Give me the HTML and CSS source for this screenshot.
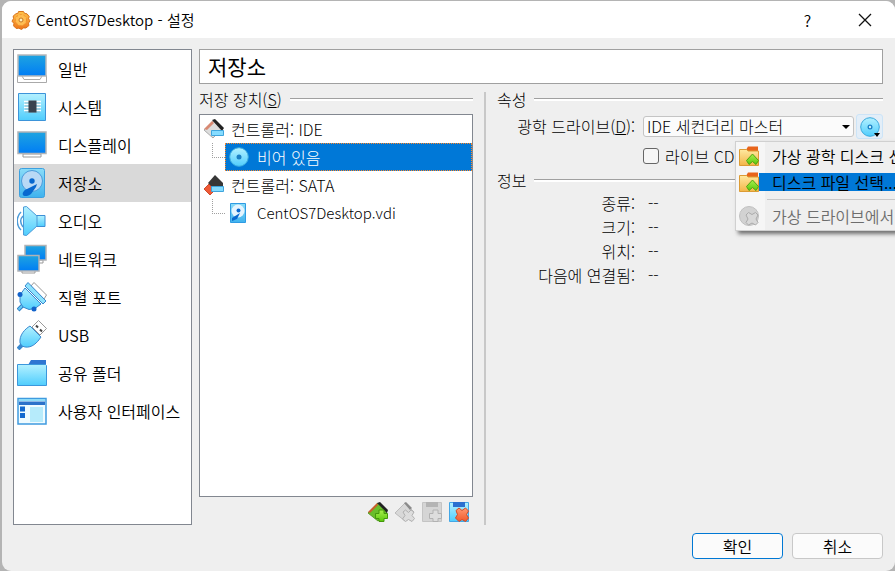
FILE: index.html
```html
<!DOCTYPE html>
<html lang="ko">

<head>
    <meta charset="UTF-8">
    <meta name="viewport" content="width=device-width, initial-scale=1.0">
    <title>CentOS7Desktop - 설정</title>
    <link rel="stylesheet" href="styles.css">
</head>

<body>
    <!-- shared gradients and icon shapes -->
    <svg class="defs" width="0" height="0" aria-hidden="true">
        <defs>
            <linearGradient id="screen" x1="0" y1="0" x2="0" y2="1">
                <stop offset="0" stop-color="#1fa4e0" />
                <stop offset="1" stop-color="#007df5" />
            </linearGradient>
            <linearGradient id="sky" x1="0" y1="0" x2="0" y2="1">
                <stop offset="0" stop-color="#b4f1ff" />
                <stop offset="1" stop-color="#4fcdfd" />
            </linearGradient>
            <linearGradient id="disk" x1="0" y1="0" x2="0" y2="1">
                <stop offset="0" stop-color="#8adcf8" />
                <stop offset="1" stop-color="#3fb2ee" />
            </linearGradient>
            <linearGradient id="gold" x1="0" y1="0" x2="0" y2="1">
                <stop offset="0" stop-color="#ffe9a0" />
                <stop offset="1" stop-color="#f3b548" />
            </linearGradient>
            <linearGradient id="orange" x1="0" y1="0" x2="0" y2="1">
                <stop offset="0" stop-color="#ffc44d" />
                <stop offset="1" stop-color="#ee7419" />
            </linearGradient>
            <linearGradient id="green" x1="0" y1="0" x2="0" y2="1">
                <stop offset="0" stop-color="#a8ef4c" />
                <stop offset="1" stop-color="#5bc70d" />
            </linearGradient>
            <linearGradient id="red" x1="0" y1="0" x2="0" y2="1">
                <stop offset="0" stop-color="#ff9a72" />
                <stop offset="1" stop-color="#f2592b" />
            </linearGradient>
            <symbol id="cd" viewBox="0 0 20 20">
                <circle cx="10" cy="10" r="9.300" fill="url(#sky)" stroke="#3ba9dc" />
                <circle cx="10" cy="10" r="2.500" fill="#1c7fc4" />
            </symbol>
            <symbol id="folder-up" viewBox="0 0 20 20">
                <path d="M7 4l2-3.500h10V6H7z" fill="#e8641b" />
                <path d="M.5 3.500h7L9 5h10.500v14.500H.5z" fill="url(#gold)" stroke="#dc9c35" />
                <path d="M13.500 8l6 6.500-2.500 4-3.500-3-3.500 3-2.500-4z" fill="url(#green)" stroke="#4da411" />
            </symbol>
        </defs>
    </svg>

    <div class="window">
        <header class="titlebar">
            <svg class="gear" viewBox="0 0 20 20">
                <path d="M7.500 1.500h5l1.200 2 2.300.3 2.200 2.700-.7 2.300 1.500 2-1.500 2.300.4 2.500-3 2.400-2.400-.1-2 1.600-2.700-1.300-2.600.3-2.600-2.600.3-2.500-1.900-2.200L2.500 8.500 2.200 6 5 3.700l1.800-.2z" fill="url(#orange)" stroke="#d9731c" />
                <circle cx="10" cy="10" r="5.500" fill="#ffbd52" stroke="#f0912d" stroke-dasharray="2 2" />
                <circle cx="10" cy="10" r="2" fill="#fff0bf" stroke="#c77521" />
            </svg>
            <h1>CentOS7Desktop - 설정</h1>
            <button class="caption" aria-label="도움말">?</button>
            <button class="caption" aria-label="닫기">
                <svg width="14" height="14" viewBox="0 0 14 14" stroke="#111" stroke-width="1.300"><path d="M1 1l12 12M13 1L1 13" /></svg>
            </button>
        </header>

        <div class="content">
            <nav class="sidebar">
                <a href="#">
                    <svg viewBox="0 0 30 30">
                        <path d="M.5 21.500h29v7H.5z" fill="#fff" stroke="#aaa" />
                        <path d="M5 22l2 3.500h16l2-3.500" fill="#fff" stroke="#aaa" />
                        <path d="M1 1h28v21H1z" fill="url(#screen)" stroke="#b5b8bb" stroke-width="1.500" />
                    </svg>
                    일반
                </a>
                <a href="#">
                    <svg viewBox="0 0 30 30">
                        <path d="M1.500 1.500h27v27h-27z" fill="url(#sky)" stroke="#3d94d9" />
                        <path d="M7 9.500h17M7 12.500h17M7 15.500h17M7 18.500h17" stroke="#fff" stroke-width="1.500" />
                        <path d="M8 11h15M8 14h15M8 17h15M8 20h15" stroke="#9aaab3" stroke-width=".7" />
                        <path d="M11.500 8.500h8v12h-8z" fill="#39424e" />
                    </svg>
                    시스템
                </a>
                <a href="#">
                    <svg viewBox="0 0 30 30">
                        <path d="M6 24h18v3H6z" fill="#fff" stroke="#999" />
                        <path d="M1 2h28v21.500H1z" fill="url(#screen)" stroke="#b0b3b6" stroke-width="1.500" />
                    </svg>
                    디스플레이
                </a>
                <a href="#" class="active">
                    <svg viewBox="0 0 30 30">
                        <rect x="2.500" y=".5" width="25" height="29" rx="2" fill="url(#disk)" stroke="#3da0df" />
                        <circle cx="15" cy="13" r="10.500" fill="#b9d9f5" stroke="#4c9cdb" />
                        <path d="M20 16l-1 3-5 7c-2 2-7 3-8 1s1-5 4-6z" fill="#0868cf" />
                        <circle cx="15" cy="13" r="2.700" fill="#0868cf" />
                    </svg>
                    저장소
                </a>
                <a href="#">
                    <svg viewBox="0 0 30 30">
                        <path d="M4 6C-1 11-1 19 4 24M6 10c-3 3-3 7 0 11" fill="none" stroke="#4c9bd8" stroke-width="1.500" />
                        <path d="M17 9.500h11v11H17z" fill="url(#sky)" stroke="#3c8fd6" />
                        <path d="M6.500 1l3-.5L20 10v10L9.500 29.500l-3-.5z" fill="url(#sky)" stroke="#4c9bd8" />
                    </svg>
                    오디오
                </a>
                <a href="#">
                    <svg viewBox="0 0 30 30">
                        <path d="M20 16h6v3h-6z" fill="#fff" stroke="#999" />
                        <path d="M8 1.500h21V16H8z" fill="url(#screen)" stroke="#b0b3b6" stroke-width="1.500" />
                        <path d="M5 26.500h13v2.500H5z" fill="#fff" stroke="#999" />
                        <path d="M1 11.500h21V27H1z" fill="url(#screen)" stroke="#b0b3b6" stroke-width="1.500" />
                    </svg>
                    네트워크
                </a>
                <a href="#">
                    <svg viewBox="0 0 30 30">
                        <path d="M14 4l3-3.500L29.500 13 27 17z" fill="#fff" stroke="#999" />
                        <path d="M1 28l5-5" stroke="#2f7fc6" stroke-width="4" />
                        <path d="M1.500 27.500L6 23" stroke="#65c9f5" stroke-width="2" />
                        <path d="M8 6L24 22l-6 4.500-6 1-6-2.500-3-5v-7z" fill="url(#sky)" stroke="#3988cf" />
                        <path d="M8 4l3-3.500L29 19l-3 3z" fill="#8ce2fd" stroke="#3988cf" />
                        <circle cx="3" cy="12.500" r="2.500" fill="#1263cb" />
                        <circle cx="17" cy="27" r="2.500" fill="#1263cb" />
                    </svg>
                    직렬 포트
                </a>
                <a href="#">
                    <svg viewBox="0 0 30 30">
                        <path d="M15 7l6.500-6.500 8 8L23 15z" fill="#fff" stroke="#999" />
                        <path d="M19 5.500l2 2M23 9.500l2 2" stroke="#444" stroke-width="2" />
                        <path d="M1 29l4-4" stroke="#3988cf" stroke-width="4" />
                        <path d="M13 6l11 11c-4 6-9 11-16 10l-3-1-2-3C2 15 8 9 13 6z" fill="url(#sky)" stroke="#3988cf" />
                    </svg>
                    USB
                </a>
                <a href="#">
                    <svg viewBox="0 0 30 30">
                        <path d="M11 7l3-5h15v6H11z" fill="#2f76d2" />
                        <path d="M.5 6.500h28l1 1v20H.5z" fill="url(#sky)" stroke="#3b97dc" />
                    </svg>
                    공유 폴더
                </a>
                <a href="#">
                    <svg viewBox="0 0 30 30">
                        <path d="M1 2.500h28v25.500H1z" fill="#effbff" stroke="#3f9bdf" stroke-width="1.500" />
                        <path d="M2 3h26v2H2z" fill="#8edcf8" />
                        <path d="M2 5.500h26v3.500H2z" fill="#2c72ca" />
                        <path d="M3 10.500h5v5H3zM3 17h5v5H3z" fill="#1368ce" />
                        <path d="M13 11h13v15H13z" fill="#b6ebfb" />
                    </svg>
                    사용자 인터페이스
                </a>
            </nav>

            <main class="page">
                <h2 class="page-title">저장소</h2>

                <div class="columns">
                    <section class="devices">
                        <h3 class="group"><span>저장 장치(<u>S</u>)</span></h3>
                        <ul class="tree">
                            <li>
                                <svg viewBox="0 0 20 20">
                                    <path d="M0 11L9 2l9 8-9 9z" fill="#ddd" stroke="#aaa" />
                                    <path d="M0 10l8-8 2 2-7 7z" fill="#d88973" />
                                    <path d="M8 1l3-1 9 9-2 3z" fill="#222" />
                                    <path d="M7.500 11.500h12v5h-12z" fill="#86dcff" stroke="#3fa4dc" />
                                </svg>
                                컨트롤러: IDE
                            </li>
                            <li class="child">
                                <span class="branch"></span>
                                <span class="node selected">
                                    <svg viewBox="0 0 20 20"><use href="#cd" /></svg>
                                    비어 있음
                                </span>
                            </li>
                            <li>
                                <svg viewBox="0 0 20 20">
                                    <path d="M0 14l5-5 6 6-5 5z" fill="#ef5a36" stroke="#cf4c2d" />
                                    <path d="M4 8l7-8 8 8v5l-8 2z" fill="#373737" />
                                    <path d="M7.500 11.500h12v5h-12z" fill="#86dcff" stroke="#3fa4dc" />
                                </svg>
                                컨트롤러: SATA
                            </li>
                            <li class="child">
                                <span class="branch"></span>
                                <span class="node file">
                                    <svg viewBox="0 0 20 20">
                                        <path d="M1.500.5h15v19h-15z" fill="url(#disk)" stroke="#2e9be3" />
                                        <circle cx="9" cy="8" r="6.500" fill="#e4f4fe" />
                                        <path d="M11 10l-3 6-5 2v-3z" fill="#0868cf" />
                                        <circle cx="9.500" cy="7.500" r="2" fill="#0868cf" />
                                    </svg>
                                    CentOS7Desktop.vdi
                                </span>
                            </li>
                        </ul>
                        <div class="toolbar">
                            <button aria-label="컨트롤러 추가">
                                <svg viewBox="0 0 20 20">
                                    <path d="M0 11L10 1l9 9-9 9z" fill="#69bd2b" stroke="#5b9e2c" />
                                    <path d="M0 10l9-9 1 2-8 8z" fill="#c75f2c" />
                                    <path d="M9 1l3-1 8 8-1 3z" fill="#222" />
                                    <path d="M11 8h5v3.500h3.500v5H16v3h-5v-3H7.500v-5H11z" fill="url(#green)" stroke="#43980b" />
                                </svg>
                            </button>
                            <button aria-label="컨트롤러 삭제" disabled>
                                <svg viewBox="0 0 20 20">
                                    <path d="M0 11L10 1l9 9-9 9z" fill="#d8d8d8" stroke="#bbb" />
                                    <path d="M9 1l2-1 6 6-2 2z" fill="#8b8b8b" />
                                    <path d="M8 10l2.500-2 3 2.500L16 8l3 2-2 3.500 2.500 3L17 19.500l-3.500-2-3 2L7.500 17l2.500-3.500z" fill="#ddd" stroke="#b0b0b0" />
                                </svg>
                            </button>
                            <button aria-label="연결 추가" disabled>
                                <svg viewBox="0 0 20 20">
                                    <path d="M.5.5h19v19H.5z" fill="#d5d5d5" stroke="#c4c4c4" />
                                    <path d="M4 0h12v5H4z" fill="#b4b4b4" />
                                    <path d="M11 8h5v3.500h3.500v5H16v3h-5v-3H7.500v-5H11z" fill="#ddd" stroke="#b2b2b2" />
                                </svg>
                            </button>
                            <button aria-label="연결 삭제">
                                <svg viewBox="0 0 20 20">
                                    <path d="M.5.5h19v19H.5z" fill="url(#sky)" stroke="#43a7e6" />
                                    <path d="M4 0h12v5H4z" fill="#2b70cf" />
                                    <path d="M7 8.500L10 6l3 2.500L16.500 6l3 3-2 3.500 2 3.500-3 3.500-3.500-2-3 2L6.500 16l2-3.500z" fill="url(#red)" stroke="#d24a25" />
                                </svg>
                            </button>
                        </div>
                    </section>

                    <div class="divider"></div>

                    <section class="details">
                        <h3 class="group">속성</h3>
                        <div class="form">
                            <label for="drive">광학 드라이브(<u>D</u>):</label>
                            <div class="field">
                                <div class="combo">
                                    <select id="drive">
                                        <option>IDE 세컨더리 마스터</option>
                                    </select>
                                </div>
                                <div class="picker">
                                    <button class="disc" aria-label="디스크 선택">
                                        <svg width="20" height="20" viewBox="0 0 20 20">
                                            <use href="#cd" />
                                            <circle cx="10" cy="10" r="1.200" fill="#c9f1fd" />
                                            <path d="M14 16h6l-3 4z" fill="#000" />
                                        </svg>
                                    </button>
                                    <div class="menu" role="menu">
                                        <button role="menuitem">
                                            <svg viewBox="0 0 20 20"><use href="#folder-up" /></svg>
                                            <span>가상 광학 디스크 선택</span>
                                        </button>
                                        <button role="menuitem" class="hover">
                                            <svg viewBox="0 0 20 20"><use href="#folder-up" /></svg>
                                            <span>디스크 파일 선택...</span>
                                        </button>
                                        <hr>
                                        <button role="menuitem" disabled>
                                            <svg viewBox="0 0 20 20">
                                                <circle cx="10" cy="10" r="9.500" fill="#d2d2d2" stroke="#c0c0c0" />
                                                <path d="M7 9l2.500-2.500 3.500 2 3.500-2L19 9l-2 4 2 3.500-2.500 2.500-3.500-2-3.500 2L7 16.500 9 13z" fill="#d8d8d8" stroke="#aaa" />
                                            </svg>
                                            <span>가상 드라이브에서</span>
                                        </button>
                                    </div>
                                </div>
                            </div>
                            <label class="check"><input type="checkbox">라이브 CD</label>
                        </div>

                        <h3 class="group">정보</h3>
                        <dl class="info">
                            <dt>종류:</dt>
                            <dd>--</dd>
                            <dt>크기:</dt>
                            <dd>--</dd>
                            <dt>위치:</dt>
                            <dd>--</dd>
                            <dt>다음에 연결됨:</dt>
                            <dd>--</dd>
                        </dl>
                    </section>
                </div>
            </main>
        </div>

        <footer class="actions">
            <button class="primary">확인</button>
            <button>취소</button>
        </footer>
    </div>
</body>

</html>
```
FILE: styles.css
```css
* {
    box-sizing: border-box;
    margin: 0;
    padding: 0;
}

body {
    background: #b4b4b4;
    color: #000;
    font: 350 16px/24px "Noto Sans CJK KR", sans-serif;
}

button,
select {
    font: inherit;
    color: inherit;
    border: none;
    background: none;
}

svg {
    display: block;
    flex: none;
}

.defs {
    position: absolute;
}

.window {
    display: flex;
    flex-direction: column;
    min-height: calc(100vh - 1px);
    margin: 1px 0 0 2px;
    border-radius: 9px;
    background: #efefef;
    overflow: hidden;
}

/* title bar */
.titlebar {
    display: flex;
    align-items: center;
    height: 37px;
    padding: 0 2px 0 9px;
    background: #fff;
}

.gear {
    width: 20px;
    height: 20px;
    margin-right: 5px;
}

.titlebar h1 {
    flex: 1;
    font-size: 15px;
    font-weight: 350;
}

.caption {
    display: flex;
    align-items: center;
    justify-content: center;
    width: 57px;
    height: 37px;
}

.content {
    display: flex;
    flex: 1;
    gap: 7px;
    padding: 11px 12px 0 11px;
}

/* category list */
.sidebar {
    width: 179px;
    border: 1px solid #828790;
    background: #fff;
}

.sidebar a {
    display: flex;
    align-items: center;
    gap: 11px;
    height: 38px;
    padding-left: 3px;
    color: #000;
    text-decoration: none;
    white-space: nowrap;
}

.sidebar .active {
    background: #d9d9d9;
}

.sidebar svg {
    width: 30px;
    height: 30px;
}

.page {
    display: flex;
    flex: 1;
    flex-direction: column;
    min-width: 0;
}

.page-title {
    padding: 0 8px;
    border: 1px solid #a0a0a0;
    background: #fff;
    font-size: 21px;
    font-weight: 400;
    line-height: 33px;
}

.columns {
    display: flex;
    flex: 1;
    padding-top: 4px;
}

.group {
    display: flex;
    align-items: center;
    gap: 8px;
    height: 22px;
    font-size: 16px;
    font-weight: 300;
}

.group::after {
    content: "";
    flex: 1;
    height: 2px;
    border-top: 1px solid #a0a0a0;
    background: #fff;
}

/* storage tree */
.devices {
    display: flex;
    flex-direction: column;
    width: 274px;
    font-weight: 300;
}

.tree {
    flex: 1;
    margin-top: 4px;
    border: 1px solid #828790;
    background: #fff;
    list-style: none;
}

.tree li {
    display: flex;
    align-items: center;
    gap: 7px;
    height: 28px;
    padding-left: 4px;
}

.tree svg {
    width: 20px;
    height: 20px;
}

.tree .child {
    align-items: flex-start;
    gap: 0;
    padding-left: 12px;
}

.branch {
    width: 13px;
    height: 15px;
    border: dotted #a0a0a0;
    border-width: 0 0 1px 1px;
}

.node {
    display: flex;
    flex: 1;
    align-items: center;
    gap: 8px;
    height: 28px;
    padding-left: 3px;
    border: 1px solid transparent;
}

.file {
    font-size: 15px;
}

.selected {
    border: 1px dotted #ff8728;
    background: #0078d7;
    color: #fff;
}

.toolbar {
    display: flex;
    justify-content: flex-end;
    gap: 7px;
    padding: 5px 4px 3px;
}

.toolbar svg {
    width: 20px;
    height: 20px;
}

.divider {
    width: 2px;
    margin: 4px 11px 0;
    background: #c8c8c8;
}

/* attributes */
.details {
    flex: 1;
    font-weight: 300;
}

.form,
.info {
    display: grid;
    grid-template-columns: 138px 1fr;
    column-gap: 8px;
}

.form {
    row-gap: 4px;
    padding-top: 4px;
}

.form > label:first-child,
.info dt {
    text-align: right;
    white-space: nowrap;
}

.field {
    display: flex;
    align-items: center;
    gap: 2px;
}

.combo {
    position: relative;
    flex: 1;
}

.combo select {
    display: block;
    width: 100%;
    height: 21px;
    padding-left: 3px;
    border: 1px solid #c4c4c4;
    border-radius: 3px;
    background: #fbfbfb;
    line-height: 19px;
    appearance: none;
}

.combo::after {
    content: "";
    position: absolute;
    top: 9px;
    right: 4px;
    border: 4px solid transparent;
    border-top-color: #000;
    border-bottom: none;
}

.picker {
    position: relative;
}

.disc {
    display: flex;
    align-items: center;
    justify-content: center;
    width: 27px;
    height: 25px;
    border: 1px solid #cce4f7;
    border-radius: 3px;
    background: #e3eef8;
}

.check {
    display: flex;
    grid-column: 2;
    align-items: center;
    gap: 6px;
    height: 26px;
}

.check input {
    width: 16px;
    height: 16px;
    border: 1px solid #666;
    border-radius: 3px;
    background: #f6f6f6;
    appearance: none;
}

.info dd {
    padding-left: 5px;
}

/* disc popup menu, runs off the right edge of the window */
.menu {
    position: absolute;
    top: 27px;
    right: -50px;
    width: 198px;
    padding: 1px 3px;
    border: 1px solid #d0d0d0;
    background: linear-gradient(90deg, #f6f6f6 29px, #efefef 29px);
    box-shadow: 3px 3px 4px #00000088;
    font-weight: 350;
}

.menu button {
    display: flex;
    align-items: center;
    width: 100%;
    height: 26px;
    text-align: left;
    white-space: nowrap;
}

.menu svg {
    width: 20px;
    height: 20px;
}

.menu span {
    flex: 1;
    padding-left: 13px;
    line-height: 18px;
}

.menu .hover span {
    background: #0078d7;
}

.menu hr {
    margin: 4px 0 3px 28px;
    border: none;
    border-top: 1px solid #c8c8c8;
}

.menu button:disabled {
    color: #6d6d6d;
}

.actions {
    display: flex;
    justify-content: flex-end;
    gap: 9px;
    padding: 8px 12px 12px;
}

.actions button {
    width: 91px;
    height: 26px;
    border: 1px solid #c8c8c8;
    border-radius: 4px;
    background: #fbfbfb;
}

.actions .primary {
    border-color: #0078d4;
}
```
